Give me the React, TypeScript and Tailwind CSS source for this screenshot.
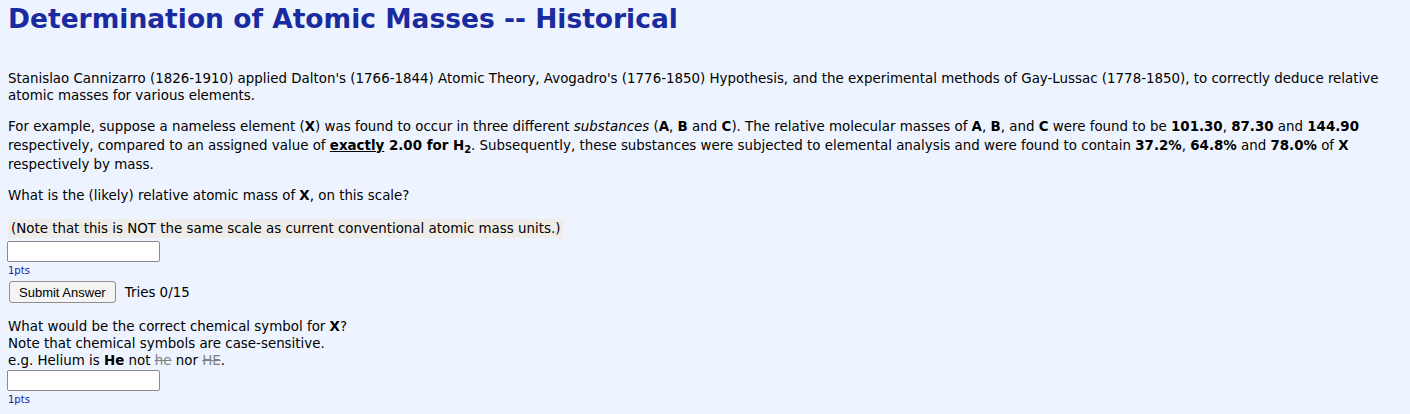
export default function App() {
  const font = { fontFamily: '"DejaVu Sans", Verdana, sans-serif' }
  return (
    <div className="min-h-[414px] bg-[#edf4ff] text-[13.4px] leading-[17px] text-black px-2" style={font}>
      <h1 className="pt-[3px] text-[26.5px] leading-[32px] font-bold text-[#1a2aa0]">
        Determination of Atomic Masses -- Historical
      </h1>

      <p className="mt-[35px]">
        Stanislao Cannizarro (1826-1910) applied Dalton's (1766-1844) Atomic Theory, Avogadro's (1776-1850) Hypothesis, and the
        experimental methods of Gay-Lussac (1778-1850), to correctly deduce relative atomic masses for various elements.
      </p>

      <p className="mt-[13px] leading-[19px]">
        For example, suppose a nameless element (<b>X</b>) was found to occur in three different <i>substances</i> (<b>A</b>,{' '}
        <b>B</b> and <b>C</b>). The relative molecular masses of <b>A</b>, <b>B</b>, and <b>C</b> were found to be{' '}
        <b>101.30</b>, <b>87.30</b> and <b>144.90</b> respectively, compared to an assigned value of{' '}
        <b>
          <u>exactly</u> 2.00 for H<sub className="text-[10px] leading-none">2</sub>
        </b>
        . Subsequently, these substances were subjected to elemental analysis and were found to contain <b>37.2%</b>,{' '}
        <b>64.8%</b> and <b>78.0%</b> of <b>X</b> respectively by mass.
      </p>

      <p className="mt-[13px]">
        What is the (likely) relative atomic mass of <b>X</b>, on this scale?
      </p>

      <div className="mt-[15px] flex">
        <span className="bg-[#eeede9] px-[3px] py-[1px] leading-[17px]">
          (Note that this is NOT the same scale as current conventional atomic mass units.)
        </span>
      </div>

      <input
        type="text"
        className="block mt-[3px] w-[153px] h-[21px] bg-white border border-[#8a8a8a] rounded-[2px] -ml-[1px]"
      />
      <div className="mt-[2px] text-[10px] leading-[13px] text-[#1a1aa0]">1pts</div>

      <div className="mt-[4px] flex items-center gap-[9px]">
        <button
          className="ml-[1px] h-[22px] px-[9px] bg-[#f4f4f4] border border-[#8f8f8f] rounded-[3px] text-[13px] leading-[17px] text-black"
          style={{ fontFamily: '"Liberation Sans", Arial, sans-serif' }}
        >
          Submit Answer
        </button>
        <span>Tries 0/15</span>
      </div>

      <div className="mt-[15px]">
        <div>
          What would be the correct chemical symbol for <b>X</b>?
        </div>
        <div>Note that chemical symbols are case-sensitive.</div>
        <div>
          e.g. Helium is <b>He</b> not <s className="text-[#808080]">he</s> nor <s className="text-[#808080]">HE</s>.
        </div>
      </div>

      <input
        type="text"
        className="block mt-[1px] w-[153px] h-[21px] bg-white border border-[#8a8a8a] rounded-[2px] -ml-[1px]"
      />
      <div className="mt-[2px] text-[10px] leading-[13px] text-[#1a1aa0]">1pts</div>
    </div>
  )
}
